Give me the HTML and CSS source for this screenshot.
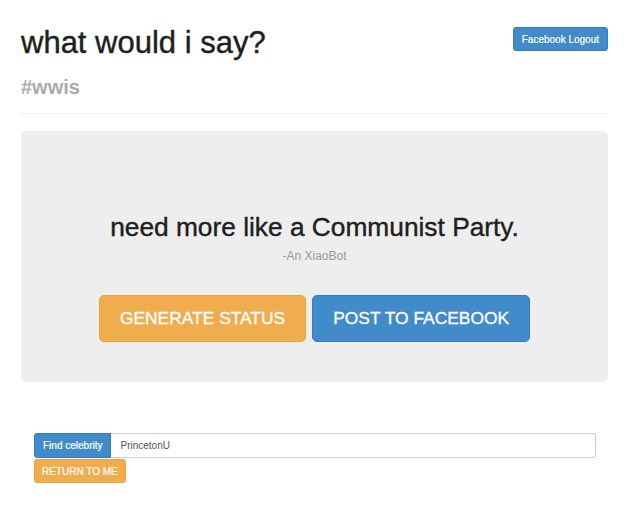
FILE: index.html
```html
<!DOCTYPE html>
<html>
<head>
<meta charset="utf-8">
<link rel="stylesheet" href="styles.css">
</head>
<body>
<div class="container">
  <div class="header">
    <div class="titles">
      <h1 class="title">what would i say?</h1>
      <div class="tag">#wwis</div>
    </div>
    <button class="btn btn-primary btn-sm">Facebook Logout</button>
  </div>
  <div class="jumbotron">
    <p class="quote">need more like a Communist Party.</p>
    <p class="author">-An XiaoBot</p>
    <div class="actions">
      <button class="btn btn-warning btn-lg">GENERATE STATUS</button>
      <button class="btn btn-primary btn-lg">POST TO FACEBOOK</button>
    </div>
  </div>
  <div class="finder">
    <div class="input-group">
      <span class="addon">Find celebrity</span>
      <span class="field">PrincetonU</span>
    </div>
    <button class="btn btn-warning btn-xs">RETURN TO ME</button>
  </div>
</div>
</body>
</html>
```
FILE: styles.css
```css
* { box-sizing: border-box; }
body {
  margin: 0;
  font-family: "Liberation Sans", Arial, sans-serif;
  color: #333;
  background: #fff;
}
.container {
  width: 608px;
  padding-left: 21px;
}
.header {
  display: flex;
  justify-content: space-between;
  align-items: flex-start;
  padding-top: 27px;
  padding-bottom: 15px;
  border-bottom: 1px solid #eee;
}
.title {
  margin: 0;
  font-size: 31px;
  font-weight: normal;
  line-height: 32px;
  color: #1e1e1e;
  -webkit-text-stroke: 0.4px #1e1e1e;
}
.tag {
  margin-top: 17px;
  font-size: 20px;
  font-weight: bold;
  line-height: 22px;
  color: #aaa;
}
.btn {
  font-family: "Liberation Sans", Arial, sans-serif;
  border: 1px solid;
  color: #fff;
  cursor: pointer;
}
.btn-primary { background: #428bca; border-color: #357ebd; }
.btn-warning { background: #f0ad4e; border-color: #eea236; }
.btn-sm {
  font-size: 10px;
  height: 24px;
  padding: 0 8px;
  border-radius: 3px;
  -webkit-text-stroke: 0.2px #fff;
}
.jumbotron {
  margin-top: 17px;
  background: #eee;
  border-radius: 5px;
  height: 251px;
  padding-top: 81px;
  text-align: center;
}
.quote {
  margin: 0;
  font-size: 26.3px;
  line-height: 30px;
  color: #1e1e1e;
  -webkit-text-stroke: 0.4px #1e1e1e;
}
.author {
  margin: 7px 0 0;
  font-size: 12px;
  line-height: 14px;
  color: #999;
}
.actions {
  margin-top: 32px;
  display: flex;
  justify-content: center;
  gap: 6px;
}
.btn-lg {
  font-size: 17.4px;
  height: 47px;
  padding: 0 20px;
  border-radius: 5px;
  -webkit-text-stroke: 0.3px #fff;
}
.finder {
  margin-top: 51px;
  padding-left: 13px;
}
.input-group {
  display: flex;
  width: 562px;
  height: 25px;
}
.addon {
  background: #428bca;
  border: 1px solid #357ebd;
  color: #fff;
  font-size: 10px;
  line-height: 23px;
  padding: 0 8px;
  border-radius: 3px 0 0 3px;
  -webkit-text-stroke: 0.2px #fff;
}
.field {
  flex: 1;
  border: 1px solid #ccc;
  border-left: none;
  border-radius: 0 3px 3px 0;
  font-size: 10px;
  line-height: 23px;
  padding: 0 9px;
  color: #555;
}
.btn-xs {
  display: block;
  margin-top: 1px;
  font-size: 10px;
  height: 24px;
  padding: 0 7px;
  border-radius: 3px;
  -webkit-text-stroke: 0.2px #fff;
}
```
